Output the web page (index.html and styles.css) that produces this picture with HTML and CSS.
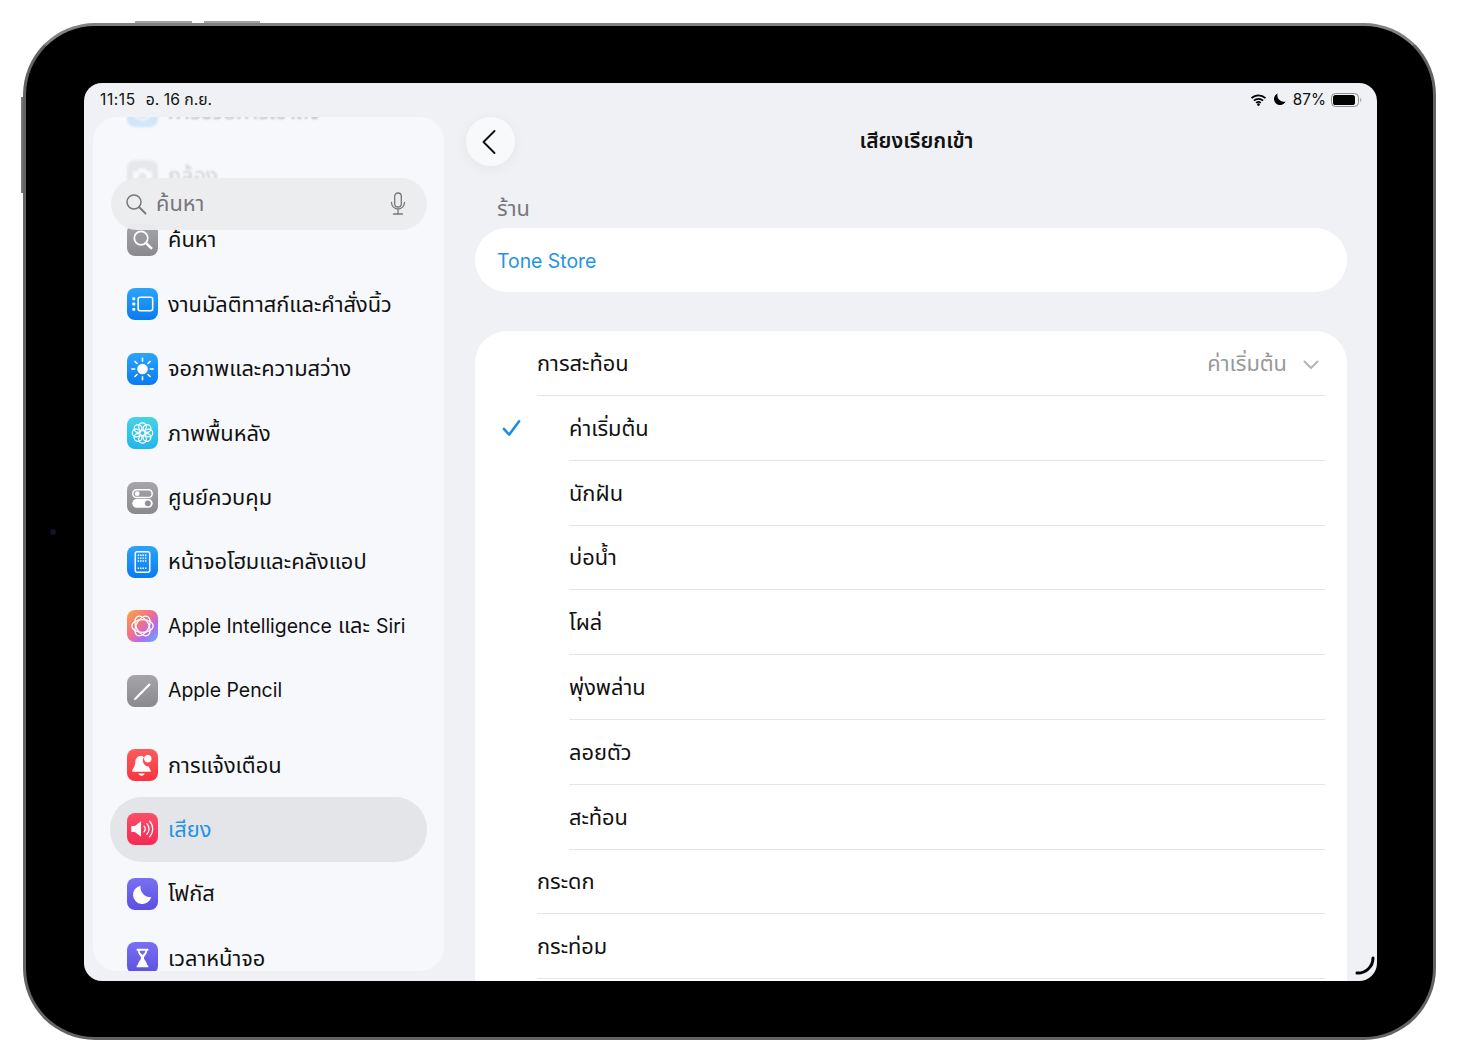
FILE: index.html
```html
<!DOCTYPE html>
<html lang="th">
<head>
    <meta charset="UTF-8">
    <meta name="viewport" content="width=device-width, initial-scale=1.0">
    <title>เสียงเรียกเข้า</title>
    <link rel="stylesheet" href="styles.css">
</head>
<body>
    <div class="device">
        <span class="hw hw-top-a"></span>
        <span class="hw hw-top-b"></span>
        <span class="hw hw-left"></span>
        <span class="camera"></span>

        <div class="screen">
            <div class="status">
                <div class="status-left"><span class="clock">11:15</span><span>อ. 16 ก.ย.</span></div>
                <div class="status-right">
                    <svg class="wifi" width="17" height="12" viewBox="0 0 16 12"><path d="M1 4.200a10 10 0 0 1 14 0M3.400 6.700a6.600 6.600 0 0 1 9.200 0M5.700 9a3.300 3.300 0 0 1 4.600 0" fill="none" stroke="#000" stroke-width="1.700"/><circle cx="8" cy="10.600" r="1.300"/></svg>
                    <svg class="moon" width="13" height="13" viewBox="0 0 13 13"><path d="M4.600.6a6 6 0 1 0 7.900 7.900A6.400 6.400 0 0 1 4.600.6z"/></svg>
                    <span class="battery-pct">87%</span>
                    <svg width="31" height="14" viewBox="0 0 31 14"><rect x=".5" y=".5" width="27" height="13" rx="4" fill="none" stroke="#8e8e90"/><rect x="2" y="2" width="22" height="10" rx="2.600"/><path d="M29.300 5v4a2 2 0 0 0 1-2 2 2 0 0 0-1-2z" fill="#8e8e90"/></svg>
                </div>
            </div>

            <aside class="sidebar">
                <div class="side-list">
                    <div class="side-row faded">
                        <span class="app-icon bg-sky"><svg viewBox="0 0 32 32"><circle cx="16" cy="16" r="9" fill="none" stroke="#fff" stroke-width="2"/></svg></span>
                        <span>การช่วยการเข้าถึง</span>
                    </div>
                    <div class="side-row faded more">
                        <span class="app-icon bg-gray"><svg viewBox="0 0 32 32"><path d="M6 11h5l2-3h6l2 3h5v13H6z" fill="#fff"/><circle cx="16" cy="17" r="4" fill="#9a9a9e"/></svg></span>
                        <span>กล้อง</span>
                    </div>
                    <div class="side-row">
                        <span class="app-icon bg-gray"><svg viewBox="0 0 32 32"><circle cx="14.500" cy="14" r="7" fill="none" stroke="#fff" stroke-width="1.800"/><path d="M19.500 19l5.500 5.500" stroke="#fff" stroke-width="2.600" stroke-linecap="round"/></svg></span>
                        <span>ค้นหา</span>
                    </div>
                    <div class="side-row">
                        <span class="app-icon bg-blue"><svg viewBox="0 0 32 32"><rect x="11.500" y="9" width="15" height="14" rx="2" fill="none" stroke="#fff" stroke-width="1.600"/><rect x="5.500" y="9" width="3" height="3" rx=".8" fill="#fff"/><rect x="5.500" y="14.500" width="3" height="3" rx=".8" fill="#fff"/><rect x="5.500" y="20" width="3" height="3" rx=".8" fill="#fff"/></svg></span>
                        <span>งานมัลติทาสก์และคำสั่งนิ้ว</span>
                    </div>
                    <div class="side-row">
                        <span class="app-icon bg-blue"><svg viewBox="0 0 32 32"><circle cx="16" cy="16" r="5.500" fill="#fff"/><path d="M16 5v3M16 24v3M5 16h3M24 16h3M8.200 8.200l2.100 2.100M21.700 21.700l2.100 2.100M8.200 23.800l2.100-2.100M21.700 10.300l2.100-2.100" stroke="#fff" stroke-width="1.600" stroke-linecap="round"/></svg></span>
                        <span>จอภาพและความสว่าง</span>
                    </div>
                    <div class="side-row">
                        <span class="app-icon bg-teal"><svg viewBox="0 0 32 32"><g fill="none" stroke="#fff" stroke-width="1.300"><circle cx="16" cy="9.500" r="4"/><circle cx="16" cy="22.500" r="4"/><circle cx="9.500" cy="16" r="4"/><circle cx="22.500" cy="16" r="4"/><circle cx="11.400" cy="11.400" r="4"/><circle cx="20.600" cy="11.400" r="4"/><circle cx="11.400" cy="20.600" r="4"/><circle cx="20.600" cy="20.600" r="4"/></g></svg></span>
                        <span>ภาพพื้นหลัง</span>
                    </div>
                    <div class="side-row">
                        <span class="app-icon bg-gray"><svg viewBox="0 0 32 32"><rect x="6" y="7.500" width="20" height="8" rx="4" fill="none" stroke="#fff" stroke-width="1.600"/><circle cx="10.500" cy="11.500" r="2.500" fill="#fff"/><rect x="5.500" y="17" width="21" height="9" rx="4.500" fill="#fff"/><circle cx="21.500" cy="21.500" r="3" fill="#8e8e93"/></svg></span>
                        <span>ศูนย์ควบคุม</span>
                    </div>
                    <div class="side-row">
                        <span class="app-icon bg-blue"><svg viewBox="0 0 32 32"><rect x="8.500" y="5.500" width="15" height="21" rx="2" fill="none" stroke="#fff" stroke-width="1.500"/><path d="M11 9h10M11 12h10M11 15h10M11 22.500h10" stroke="#fff" stroke-width="1.500" stroke-dasharray="1.500 1"/></svg></span>
                        <span>หน้าจอโฮมและคลังแอป</span>
                    </div>
                    <div class="side-row">
                        <span class="app-icon bg-ai"><svg viewBox="0 0 32 32"><g fill="none" stroke="#fff" stroke-width="1.300"><ellipse cx="16" cy="16" rx="11" ry="6.500"/><ellipse cx="16" cy="16" rx="11" ry="6.500" transform="rotate(60 16 16)"/><ellipse cx="16" cy="16" rx="11" ry="6.500" transform="rotate(120 16 16)"/></g></svg></span>
                        <span class="mixed"><span class="en">Apple Intelligence</span> และ <span class="en">Siri</span></span>
                    </div>
                    <div class="side-row">
                        <span class="app-icon bg-gray"><svg viewBox="0 0 32 32"><path d="M7 25.500l.8-2.400L22.900 8l1.600 1.600L9.400 24.700z" fill="#fff"/></svg></span>
                        <span class="en">Apple Pencil</span>
                    </div>

                    <div class="side-row group-start">
                        <span class="app-icon bg-red"><svg viewBox="0 0 32 32"><path d="M15 6.500c-4 0-6.500 3-6.500 7 0 4-2.500 6-3 8v1.500h19v-1.500c-.5-1-1.500-2-2-4a6 6 0 0 1-5-9.500 5 5 0 0 0-2.500-1.500z" fill="#fff"/><circle cx="21.500" cy="9.500" r="3.800" fill="#fff"/><path d="M12 24.800h6a3 2.200 0 0 1-6 0z" fill="#fff"/></svg></span>
                        <span>การแจ้งเตือน</span>
                    </div>
                    <div class="side-row selected">
                        <span class="app-icon bg-pink"><svg viewBox="0 0 32 32"><path d="M4.500 12.800h3.700L14.500 8v16l-6.300-4.800H4.500z" fill="#fff"/><path d="M17.500 13a4 4 0 0 1 0 6M20.500 10.500a8 8 0 0 1 0 11M23.500 8a12 12 0 0 1 0 16" fill="none" stroke="#fff" stroke-width="1.300" stroke-linecap="round"/></svg></span>
                        <span>เสียง</span>
                    </div>
                    <div class="side-row">
                        <span class="app-icon bg-indigo"><svg viewBox="0 0 32 32"><path d="M14 7.500a9.500 9.500 0 1 0 11 11.500 A10 10 0 0 1 14 7.500z" fill="#fff"/></svg></span>
                        <span>โฟกัส</span>
                    </div>
                    <div class="side-row">
                        <span class="app-icon bg-indigo"><svg viewBox="0 0 32 32"><path d="M10 6.500h12v2h-1.200c0 3.500-3.300 5.500-3.300 7.500s3.300 4 3.300 7.500H22v2H10v-2h1.200c0-3.500 3.300-5.500 3.300-7.500s-3.300-4-3.300-7.500H10zm3 2c0 1.500 1 2.500 3 4.500 2-2 3-3 3-4.500z" fill="#fff" fill-rule="evenodd"/></svg></span>
                        <span>เวลาหน้าจอ</span>
                    </div>
                </div>
                <div class="search">
                    <svg width="22" height="22" viewBox="0 0 22 22"><circle cx="9" cy="9" r="7" fill="none" stroke="#77777b" stroke-width="1.500"/><path d="M14 14l6.500 6.500" stroke="#77777b" stroke-width="1.800" stroke-linecap="round"/></svg>
                    <span class="search-text">ค้นหา</span>
                    <svg width="16" height="24" viewBox="0 0 16 24"><rect x="4.700" y="1" width="6.600" height="14" rx="3.300" fill="none" stroke="#77777b" stroke-width="1.300"/><path d="M1.500 10.500a6.500 6.500 0 0 0 13 0M8 17v4.500M3.500 22h9" fill="none" stroke="#77777b" stroke-width="1.300" stroke-linecap="round"/></svg>
                </div>
            </aside>

            <main class="main">
                <header class="nav">
                    <button class="back">
                        <svg width="16" height="26" viewBox="0 0 16 26"><path d="M13.500 2L2.500 13l11 11" fill="none" stroke="#111" stroke-width="1.900" stroke-linecap="round" stroke-linejoin="round"/></svg>
                    </button>
                    <h1>เสียงเรียกเข้า</h1>
                </header>

                <div class="section-label">ร้าน</div>
                <div class="card store"><a class="store-link en">Tone Store</a></div>

                <div class="card tones">
                    <div class="row"><span>การสะท้อน</span><span class="row-value">ค่าเริ่มต้น<svg width="16" height="10" viewBox="0 0 16 10"><path d="M1.500 1.500L8 8l6.500-6.500" fill="none" stroke="#b4b4b8" stroke-width="2" stroke-linecap="round" stroke-linejoin="round"/></svg></span></div>
                    <div class="row sub">
                        <svg class="check" width="19" height="18" viewBox="0 0 20 18"><path d="M2 10l5.500 6L18 2" fill="none" stroke="#1a8ee6" stroke-width="2.700" stroke-linecap="round" stroke-linejoin="round"/></svg>
                        <span>ค่าเริ่มต้น</span>
                    </div>
                    <div class="row sub"><span>นักฝัน</span></div>
                    <div class="row sub"><span>บ่อน้ำ</span></div>
                    <div class="row sub"><span>โผล่</span></div>
                    <div class="row sub"><span>พุ่งพล่าน</span></div>
                    <div class="row sub"><span>ลอยตัว</span></div>
                    <div class="row sub"><span>สะท้อน</span></div>
                    <div class="row"><span>กระดก</span></div>
                    <div class="row"><span>กระท่อม</span></div>
                </div>
            </main>

            <svg class="corner" width="22" height="22" viewBox="0 0 22 22"><path d="M19 2a15 15 0 0 1-16 15" fill="none" stroke="#000" stroke-width="3" stroke-linecap="round"/></svg>
        </div>
    </div>
</body>
</html>
```

FILE: styles.css
```css
* { box-sizing: border-box; }
html, body { margin: 0; height: 100%; overflow: hidden; background: #fff; }
body { padding: 23px 0 0 23px; font-family: Inter, "Noto Sans Thai", "Noto Sans", sans-serif; font-size: 21.800px; color: #111; }
.en { font-size: 19.400px; }

.device { position: relative; width: 1413px; height: 1017px; padding: 57px 56px 56px 58px; background: #000; border: 3px solid #636366; border-top-color: #818184; border-radius: 72px; }
.hw { position: absolute; background: #a2a2a5; }
.hw-top-a { top: -5px; left: 109px; width: 57px; height: 2px; }
.hw-top-b { top: -5px; left: 178px; width: 56px; height: 2px; }
.hw-left { top: 71px; left: -5px; width: 2px; height: 96px; background: #77777a; }
.camera { position: absolute; top: 503px; left: 24px; width: 6px; height: 6px; border-radius: 50%; background: #10132a; }

.screen { position: relative; display: flex; height: 898px; padding: 34px 0 0 9px; overflow: hidden; background: #eff1f4; border-radius: 18px; }

.status { position: absolute; top: 0; left: 0; right: 0; z-index: 3; display: flex; justify-content: space-between; align-items: center; height: 33px; padding: 0 15px 0 16px; font-size: 15.700px; }
.status-left { display: flex; align-items: baseline; gap: 10px; }
.clock { font-size: 15.500px; letter-spacing: .6px; }
.status-right { display: flex; align-items: center; gap: 6px; font-size: 15.300px; }
.status svg { display: block; }
.status .moon { margin-right: 1px; }
.status .battery-pct { margin-right: -1px; }

.sidebar { position: relative; flex: none; width: 351px; height: 854px; overflow: hidden; background: #f6f8fb; border-radius: 24px; }
.side-list { margin-top: -38px; }
.side-row { display: flex; align-items: center; gap: 10px; height: 64.400px; margin: 0 17px; padding-left: 17px; border-radius: 32px; }
.side-row > span + span { padding-top: 2px; }
.side-row > .en { padding: 0 0 2px; }
.side-row > .mixed { padding-top: 0; }
.side-row.group-start { margin-top: 10px; }
.side-row.selected { background: #e4e5e8; color: #2493e2; }
.side-row.faded { opacity: .3; filter: blur(1px); }
.side-row.faded.more { opacity: .18; }

.app-icon { flex: none; width: 31px; height: 32px; border-radius: 8px; overflow: hidden; }
.app-icon svg { display: block; width: 31px; height: 32px; }
.bg-sky { background: #7cbcf5; }
.bg-gray { background: linear-gradient(#a6a6aa, #8a8a8e); }
.bg-blue { background: linear-gradient(#2ca4fb, #0a7bf0); }
.bg-teal { background: linear-gradient(#46d3e6, #22b4ee); }
.bg-ai { background: linear-gradient(135deg, #f7a83c, #f26f8c 45%, #b46cf0 70%, #4cb9f5); }
.bg-red { background: linear-gradient(#fb5c5c, #f8333f); }
.bg-pink { background: linear-gradient(#fb4f68, #f52a55); }
.bg-indigo { background: linear-gradient(#7a70f2, #5b50e0); }

.search { position: absolute; top: 61px; left: 18px; width: 316px; height: 52px; display: flex; align-items: center; gap: 9px; padding: 0 21px 0 14px; background: rgba(235, 236, 238, .97); border-radius: 26px; color: #77777b; }
.search-text { flex: 1; }

.main { flex: 1; margin-left: 22px; padding-right: 10px; }
.nav { position: relative; display: flex; justify-content: center; align-items: center; height: 49px; }
.nav h1 { margin: 0; font-size: 21px; font-weight: 600; }
.back { position: absolute; left: 0; top: 0; display: flex; align-items: center; justify-content: center; width: 49px; height: 49px; padding: 0 3px 0 0; border: 0; border-radius: 50%; background: #f8f9fb; box-shadow: 0 2px 14px rgba(0, 0, 0, .05); }

.section-label { margin: 27px 0 0 31px; height: 35px; color: #77777b; }
.card { width: 872px; margin-left: 9px; background: #fff; border-radius: 32px; }
.store { display: flex; align-items: center; height: 64px; padding: 2px 0 0 22px; }
.store-link { color: #2493e2; }
.tones { margin-top: 39px; padding-bottom: 40px; }

.row { display: flex; align-items: center; justify-content: space-between; height: 64.800px; margin: 0 22px 0 62px; padding-top: 3px; border-bottom: 1px solid #e5e5e8; }
.row.sub { justify-content: flex-start; margin-left: 94px; }
.row:first-child { height: 65px; }
.row-value { display: flex; align-items: center; gap: 16px; margin-right: 6px; color: #98989c; }
.check { flex: none; margin: -3px 48px 0 -67px; }

.corner { position: absolute; right: 1px; bottom: 3px; }
```
